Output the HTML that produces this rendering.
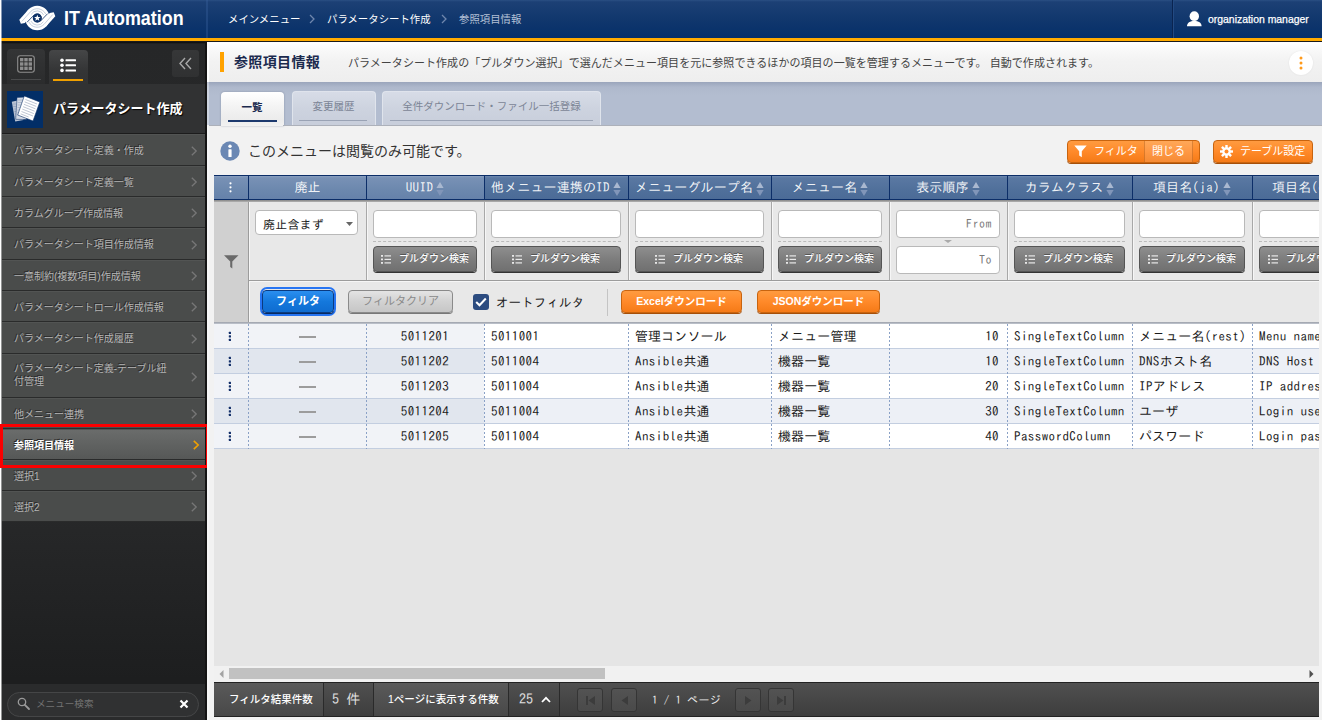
<!DOCTYPE html>
<html lang="ja">
<head>
<meta charset="utf-8">
<title>IT Automation</title>
<style>
*{box-sizing:border-box;margin:0;padding:0}
html,body{width:1322px;height:720px;overflow:hidden;background:#fff}
body{font-family:"Liberation Sans","Noto Sans CJK JP",sans-serif;font-size:12px;color:#333;position:relative}
div,span{position:absolute;white-space:nowrap}
svg{position:absolute;overflow:visible}
.g{font-family:"Liberation Mono","IPAGothic",monospace}
.ip{font-family:"IPAGothic","Liberation Mono",monospace;letter-spacing:.12px}
i{font-style:normal;letter-spacing:.42px}
#hd{left:2px;top:0;width:1320px;height:38px;background:linear-gradient(#2a4f83 0,#1c4075 5%,#11376d 50%,#052f69)}
#hdline{left:2px;top:38px;width:1320px;height:3px;background:#ffab00}
#hdline2{left:2px;top:41px;width:1320px;height:1px;background:#1a1a1a}
#logo-t{left:64px;top:6.500px;font-size:20.200px;font-weight:bold;color:#fff;transform:scaleX(.886);transform-origin:0 0}
.bc{top:11px;font-size:10.400px;color:#fff}
#user{left:1208px;top:12.500px;font-size:11px;color:#fff;transform:scaleX(.947);transform-origin:0 0;-webkit-text-stroke:.25px #fff}
#sb{left:2px;top:42px;width:203px;height:678px;background:linear-gradient(#262728,#2b2c2d 60%,#1d1e1f 94%,#1d1e1f)}
#sbr{left:205px;top:42px;width:2px;height:678px;background:#141414}
#grp{left:2px;top:84px;width:203px;height:50px;background:#313233}
#grpicon{left:7px;top:91px;width:36px;height:37px;background:#022e67;overflow:hidden}
#grpt{left:53px;top:98px;font-size:13px;font-weight:bold;color:#fff;text-shadow:1px 1px 1px #000}
.mi{left:2px;width:203px;background:#4a4c4b;border-top:1px solid #525453;border-bottom:1px solid #2a2b2b;color:#b4b4b4;font-size:10px;text-shadow:-1px -1px 0 #2a2a2a}
.mi span{left:12px}
#tb{left:207px;top:42px;width:1115px;height:40px;background:linear-gradient(#fff 0,#f8f8f8 22%,#f2f2f2 50%,#eee 100%)}
#tbbar{left:220px;top:52px;width:4px;height:20px;background:#ffa200}
#ttl{left:234px;top:51px;font-size:14px;font-weight:bold;color:#1b2a4e;letter-spacing:.35px}
#desc{left:348px;top:54px;font-size:11px;color:#444;letter-spacing:.05px}
#tabs{left:207px;top:82px;width:1115px;height:43px;background:linear-gradient(#9aa5bb,#aeb8cc 12%,#b3bdd0 30%,#b3bdd0)}
.tab{top:91px;height:34px;border-radius:4px 4px 0 0;font-size:10.500px;text-align:center;padding-top:7px}
#cont{left:207px;top:125px;width:1115px;height:595px;background:#f2f2f2}
.obtn{top:140px;height:23px;border:1px solid #c8640f;border-radius:4px;background:linear-gradient(#ff9b40,#ff8a2a 50%,#f57a17);box-shadow:0 1px 0 #a64f08;color:#fff;font-size:12px}
.th{top:175px;height:25px;border-top:1px solid #0c2e68;border-bottom:1px solid #0c2e68;color:#fff;font-size:13px;text-align:center;line-height:23px;color:rgba(255,255,255,.92)}
.thf{background:linear-gradient(#8ba1c1,#7891b5 8%,#6c88ae 60%,#6682aa)}
.thn{background:linear-gradient(#6f8ab0,#5a78a2 8%,#50709b 60%,#4b6b97)}
.fc{top:201px;height:79px;background:#e8e8e8;border-right:1px solid #c4c4c4}
.inp{top:210px;height:28px;background:#fff;border:1px solid #b9b9b9;border-radius:4px}
.dash{top:241px;height:0;border-top:1px dashed #bbb}
.pbtn{top:246px;height:26px;border:1px solid #555;border-radius:4px;background:linear-gradient(#8e8e8e,#7d7d7d 50%,#707070);box-shadow:0 1px 0 #333;color:#fff;font-size:10px;font-weight:bold;text-align:center;line-height:24px}
.td{height:25px;font-size:13px;line-height:24px;letter-spacing:.3px;color:#111;border-bottom:1px solid #c3cee0;overflow:hidden}
.bbtn{border:1px solid #0a3a80;border-radius:4px;background:linear-gradient(#2b8ff0,#1478dc 50%,#0f6cd0);box-shadow:0 1px 0 #062a60;color:#fff;font-size:11px;font-weight:bold;text-align:center;line-height:20px}
.cbtn{border:1px solid #8a8a8a;border-radius:4px;background:linear-gradient(#e4e4e4,#d2d2d2 50%,#c6c6c6);box-shadow:0 1px 0 #777;color:#8a8a8a;font-size:11px;text-align:center;line-height:20px}
.dbtn{border:1px solid #c8640f;border-radius:4px;background:linear-gradient(#ff9b40,#ff8a2a 50%,#f57a17);box-shadow:0 1px 0 #a64f08;color:#fff;font-size:10.500px;font-weight:bold;text-align:center;line-height:21px}
.ft{top:683px;height:33px;color:#fff;font-size:10.5px;line-height:33px}
.pb{top:688px;width:26px;height:24px;border:1px solid #353535;border-radius:3px;background:linear-gradient(#535353,#4a4a4a)}
</style>
</head>
<body>
<div id="hd"></div><div id="hdline"></div><div id="hdline2"></div>
<div style="left:206px;top:0;width:2px;height:38px;background:rgba(60,100,160,.35)"></div>
<svg style="left:0;top:0" width="70" height="38" viewBox="0 0 70 38">
<circle cx="37.3" cy="18" r="8.350" fill="none" stroke="#fff" stroke-width="7.700"/>
<path fill="#fff" d="M19.300 19.800L28.500 9.500 32 13.500 24.900 22.900 20.900 23.800z"/>
<path fill="#fff" d="M55.300 16.200L46.100 26.500 42.600 22.500 49.700 13.100 53.700 12.200z"/>
<g fill="none" stroke="#0f3369" stroke-width=".8">
<path d="M34.300 14.700L27 22.300"/><path d="M40.300 21.300L47.600 13.700"/>
</g>
<g fill="none" stroke="#0f3369" stroke-width=".55" opacity=".42">
<path d="M21.800 21.500L30.600 11.600A9.300 9.300 0 0 1 45.700 14"/>
<path d="M52.800 14.500L44 24.400A9.300 9.300 0 0 1 28.900 22"/>
<path d="M31.200 14.300A7.100 7.100 0 0 1 43.700 15"/>
<path d="M43.400 21.700A7.100 7.100 0 0 1 30.900 21"/>
</g>
<circle cx="37.3" cy="18" r="4.400" fill="#0e3166"/>
<path fill="#fff" transform="translate(37.3 18.100) scale(1.060)" d="M0-3.200l.8 2.100 2.250.1-1.750 1.400.6 2.170L0 1.330-1.900 2.570l.6-2.170-1.750-1.400 2.250-.1z"/>
</svg>
<div id="logo-t">IT Automation</div>
<div class="bc" style="left:228px">メインメニュー</div>
<div class="bc" style="left:327px">パラメータシート作成</div>
<div class="bc" style="left:459px;color:#b4c0d6">参照項目情報</div>
<svg style="left:309px;top:14px" width="6" height="10" viewBox="0 0 6 10"><path d="M1 1l4 4-4 4" fill="none" stroke="#6f86ad" stroke-width="1.3"/></svg>
<svg style="left:441px;top:14px" width="6" height="10" viewBox="0 0 6 10"><path d="M1 1l4 4-4 4" fill="none" stroke="#6f86ad" stroke-width="1.3"/></svg>
<div style="left:1172px;top:0;width:1px;height:38px;background:#0a2450"></div><div style="left:1173px;top:0;width:1px;height:38px;background:#234a82"></div>
<svg style="left:1186px;top:11px" width="16" height="16" viewBox="0 0 16 16"><ellipse cx="8.300" cy="5.200" rx="4.700" ry="4.900" fill="#fff"/><path d="M1 15.200c0-3.600 3-5.300 7.300-5.300s7.300 1.700 7.300 5.300z" fill="#fff"/></svg>
<div id="user">organization manager</div>
<div style="left:1px;top:0;width:1px;height:38px;background:rgba(12,50,105,.5)"></div><div style="left:1px;top:38px;width:1px;height:3px;background:rgba(255,171,0,.5)"></div><div style="left:1px;top:41px;width:1px;height:679px;background:rgba(38,39,40,.5)"></div>
<div id="sb"></div><div id="sbr"></div><div style="left:2px;top:42px;width:203px;height:2px;background:linear-gradient(#0a0a0a,rgba(10,10,10,0))"></div>
<div style="left:7px;top:49px;width:38px;height:35px;border-radius:4px 4px 0 0;background:linear-gradient(#343536,#2b2c2d)"></div>
<div style="left:11px;top:79px;width:30px;height:1px;background:#4a4b4c"></div>
<svg style="left:17px;top:55px" width="18" height="18" viewBox="0 0 18 18"><rect x=".7" y=".7" width="16.6" height="16.600" rx="2.500" fill="#2c2c2c" stroke="#8e8e8e" stroke-width="1.100"/>
<g fill="#8d8d8d"><rect x="3" y="3" width="3.4" height="3.400"/><rect x="7.3" y="3" width="3.4" height="3.400"/><rect x="11.6" y="3" width="3.4" height="3.400"/>
<rect x="3" y="7.3" width="3.4" height="3.400"/><rect x="7.3" y="7.3" width="3.4" height="3.400"/><rect x="11.6" y="7.3" width="3.4" height="3.400"/>
<rect x="3" y="11.6" width="3.4" height="3.400"/><rect x="7.3" y="11.6" width="3.4" height="3.400"/><rect x="11.6" y="11.6" width="3.4" height="3.400"/></g></svg>
<div style="left:49px;top:50px;width:39px;height:34px;border-radius:4px 4px 0 0;background:linear-gradient(#454647,#343536 60%,#313233)"></div>
<div style="left:53px;top:79px;width:30px;height:2px;background:#f0a000"></div>
<svg style="left:60px;top:57.600px" width="17" height="15" viewBox="0 0 17 15"><g fill="#fff"><circle cx="2" cy="2.2" r="1.800"/><circle cx="2" cy="7.3" r="1.800"/><circle cx="2" cy="12.4" r="1.800"/>
<rect x="5.5" y="1.2" width="10.5" height="2" rx=".5"/><rect x="5.5" y="6.3" width="10.5" height="2" rx=".5"/><rect x="5.5" y="11.4" width="10.5" height="2" rx=".5"/></g></svg>
<div style="left:172px;top:50px;width:27px;height:27px;border-radius:3px;background:linear-gradient(#363738,#303132)"></div>
<svg style="left:179px;top:57px" width="13" height="13" viewBox="0 0 13 13"><path d="M6 1L1 6.500l5 5.500M12 1L7 6.500l5 5.500" fill="none" stroke="#a8a8a8" stroke-width="1.400"/></svg>
<div id="grp"></div><div id="grpicon"></div>
<svg style="left:7px;top:92px" width="36" height="36" viewBox="0 0 36 36">
<path d="M4.800 9.800L11.500 8.300 16.500 28 8.200 29.600z" fill="#b9c3d4"/>
<path d="M5.800 12h5M6.300 14.500h5M6.800 17h5M7.300 19.500h5M7.800 22h5M8.300 24.500h5" stroke="#8d9ab2" stroke-width=".6"/>
<path d="M10 5.400L20 5 19.500 27.500 8.700 27.300z" fill="#d3d9e4" stroke="#0a2f66" stroke-width=".5"/>
<path d="M10.800 8h6M10.700 10.500h6M10.600 13h6M10.500 15.500h6M10.400 18h6M10.300 20.500h6M10.200 23h6" stroke="#9ca8bd" stroke-width=".6"/>
<path d="M17.300 3.900L32.800 10 26 29 10.700 23z" fill="#fff" stroke="#0a2f66" stroke-width=".6"/>
<g stroke="#a3adc0" stroke-width=".7"><path d="M18.500 7.500l11.500 4.500M17.700 9.900l11.500 4.500M16.900 12.300l11.500 4.500M16.100 14.700l11.500 4.500M15.300 17.100l11.500 4.500M14.500 19.500l11.500 4.500M13.700 21.900l8 3.100"/></g>
</svg>
<div id="grpt">パラメータシート作成</div>
<div style="left:2px;top:133px;width:203px;height:1px;background:#1c1c1c"></div>
<div class="mi" style="left:2px;top:134px;height:32px;"><span style="top:9px;line-height:13px">パラメータシート定義・作成</span></div>
<svg style="left:191px;top:146px" width="6" height="10" viewBox="0 0 6 10"><path d="M.8 .8l4.400 4.200-4.400 4.200" fill="none" stroke="#777" stroke-width="1.300"/></svg>
<div class="mi" style="left:2px;top:166px;height:31px;"><span style="top:9px;line-height:13px">パラメータシート定義一覧</span></div>
<svg style="left:191px;top:177px" width="6" height="10" viewBox="0 0 6 10"><path d="M.8 .8l4.400 4.200-4.400 4.200" fill="none" stroke="#777" stroke-width="1.300"/></svg>
<div class="mi" style="left:2px;top:197px;height:31px;"><span style="top:9px;line-height:13px">カラムグループ作成情報</span></div>
<svg style="left:191px;top:208px" width="6" height="10" viewBox="0 0 6 10"><path d="M.8 .8l4.400 4.200-4.400 4.200" fill="none" stroke="#777" stroke-width="1.300"/></svg>
<div class="mi" style="left:2px;top:228px;height:32px;"><span style="top:9px;line-height:13px">パラメータシート項目作成情報</span></div>
<svg style="left:191px;top:240px" width="6" height="10" viewBox="0 0 6 10"><path d="M.8 .8l4.400 4.200-4.400 4.200" fill="none" stroke="#777" stroke-width="1.300"/></svg>
<div class="mi" style="left:2px;top:260px;height:31px;"><span style="top:9px;line-height:13px">一意制約(複数項目)作成情報</span></div>
<svg style="left:191px;top:271px" width="6" height="10" viewBox="0 0 6 10"><path d="M.8 .8l4.400 4.200-4.400 4.200" fill="none" stroke="#777" stroke-width="1.300"/></svg>
<div class="mi" style="left:2px;top:291px;height:31px;"><span style="top:9px;line-height:13px">パラメータシートロール作成情報</span></div>
<svg style="left:191px;top:302px" width="6" height="10" viewBox="0 0 6 10"><path d="M.8 .8l4.400 4.200-4.400 4.200" fill="none" stroke="#777" stroke-width="1.300"/></svg>
<div class="mi" style="left:2px;top:322px;height:32px;"><span style="top:9px;line-height:13px">パラメータシート作成履歴</span></div>
<svg style="left:191px;top:334px" width="6" height="10" viewBox="0 0 6 10"><path d="M.8 .8l4.400 4.200-4.400 4.200" fill="none" stroke="#777" stroke-width="1.300"/></svg>
<div class="mi" style="left:2px;top:354px;height:44px;"><span style="top:7px;line-height:13px">パラメータシート定義-テーブル紐<br>付管理</span></div>
<svg style="left:191px;top:372px" width="6" height="10" viewBox="0 0 6 10"><path d="M.8 .8l4.400 4.200-4.400 4.200" fill="none" stroke="#777" stroke-width="1.300"/></svg>
<div class="mi" style="left:2px;top:398px;height:31px;"><span style="top:9px;line-height:13px">他メニュー連携</span></div>
<svg style="left:191px;top:409px" width="6" height="10" viewBox="0 0 6 10"><path d="M.8 .8l4.400 4.200-4.400 4.200" fill="none" stroke="#777" stroke-width="1.300"/></svg>
<div class="mi" style="left:2px;top:429px;height:31px;background:linear-gradient(#6a6c6b,#565857);color:#fff;font-weight:bold;"><span style="top:9px;line-height:13px">参照項目情報</span></div>
<svg style="left:193px;top:440px" width="6" height="10" viewBox="0 0 6 10"><path d="M.8 .8l4.400 4.200-4.400 4.200" fill="none" stroke="#f0a000" stroke-width="1.600"/></svg>
<div class="mi" style="left:2px;top:460px;height:31px;"><span style="top:9px;line-height:13px">選択1</span></div>
<svg style="left:191px;top:471px" width="6" height="10" viewBox="0 0 6 10"><path d="M.8 .8l4.400 4.200-4.400 4.200" fill="none" stroke="#777" stroke-width="1.300"/></svg>
<div class="mi" style="left:2px;top:491px;height:31px;"><span style="top:9px;line-height:13px">選択2</span></div>
<svg style="left:191px;top:502px" width="6" height="10" viewBox="0 0 6 10"><path d="M.8 .8l4.400 4.200-4.400 4.200" fill="none" stroke="#777" stroke-width="1.300"/></svg>
<div style="left:0;top:424px;width:209px;height:44px;border:3px solid #fb0000"></div>
<div style="left:2px;top:684px;width:203px;height:36px;background:#2a2b2c"></div>
<div style="left:7px;top:692px;width:192px;height:25px;border-radius:13px;background:#303132;border:1px solid #454647"></div>
<svg style="left:17px;top:697px" width="14" height="14" viewBox="0 0 14 14"><circle cx="5" cy="5" r="3.700" fill="none" stroke="#9a9a9a" stroke-width="1.300"/><path d="M7.800 7.800l4.200 4.200" stroke="#9a9a9a" stroke-width="1.800" stroke-linecap="round"/></svg>
<div style="left:36px;top:697px;font-size:9.600px;color:#737373;line-height:14px">メニュー検索</div>
<svg style="left:179px;top:699px" width="10" height="10" viewBox="0 0 10 10"><path d="M1.500 1.500l7 7M8.500 1.500l-7 7" stroke="#fff" stroke-width="2.200"/></svg>
<div id="tb"></div><div style="left:207px;top:42px;width:2px;height:40px;background:#fff"></div><div id="tbbar"></div>
<div id="ttl">参照項目情報</div>
<div id="desc">パラメータシート作成の「プルダウン選択」で選んだメニュー項目を元に参照できるほかの項目の一覧を管理するメニューです。 自動で作成されます。</div>
<div style="left:1289px;top:51px;width:24px;height:24px;border-radius:12px;background:#fff;box-shadow:0 0 2px rgba(0,0,0,.08)"></div>
<svg style="left:1299px;top:56px" width="4" height="14" viewBox="0 0 4 14"><g fill="#ff9a1a"><circle cx="2" cy="2" r="1.500"/><circle cx="2" cy="7" r="1.500"/><circle cx="2" cy="12" r="1.500"/></g></svg>
<div id="tabs"></div>
<div id="cont"></div>
<div style="left:207px;top:82px;width:2px;height:638px;background:rgba(255,255,255,.35)"></div>
<div class="tab" style="left:220.500px;width:63px;background:linear-gradient(#fff,#f3f3f3 45%,#ececec 80%,#f2f2f2);color:#1b2a4e;font-weight:bold;top:92px;box-shadow:0 0 2px rgba(40,50,80,.35)">一覧</div>
<div style="left:228px;top:120px;width:49px;height:2px;background:#1d3a6e"></div>
<div class="tab" style="left:291.500px;width:84px;background:linear-gradient(#d7dce7,#cdd3df 50%,#c8cedb);color:#7c8596;border:1px solid rgba(226,230,238,.9);border-bottom:0;padding-top:6px">変更履歴</div>
<div style="left:299px;top:120px;width:68px;height:1px;background:#9aa3b5"></div>
<div class="tab" style="left:382px;width:219px;background:linear-gradient(#d7dce7,#cdd3df 50%,#c8cedb);color:#7c8596;border:1px solid rgba(226,230,238,.9);border-bottom:0;padding-top:6px">全件ダウンロード・ファイル一括登録</div>
<div style="left:390px;top:120px;width:203px;height:1px;background:#9aa3b5"></div>
<div style="left:209px;top:125px;width:1113px;height:1px;background:#adb1ba"></div>
<div style="left:221px;top:125px;width:62px;height:1px;background:#f2f2f2"></div>
<svg style="left:220px;top:141px" width="20" height="20" viewBox="0 0 20 20"><circle cx="10" cy="10" r="9.700" fill="#6b88b4"/><circle cx="10" cy="5.300" r="1.700" fill="#fff"/><rect x="8.400" y="8.200" width="3.200" height="7.800" rx=".6" fill="#fff"/></svg>
<div style="left:248px;top:141px;font-size:14px;color:#333;line-height:20px">このメニューは閲覧のみ可能です。</div>
<div class="obtn" style="left:1067px;width:133px"></div>
<div style="left:1144px;top:141px;width:49px;height:21px;background:rgba(255,255,255,.13);border-left:1px solid rgba(150,70,0,.35);border-right:1px solid rgba(150,70,0,.35)"></div>
<svg style="left:1074px;top:145px" width="13" height="13" viewBox="0 0 13 13"><path d="M.3 .5h12.400L7.800 6.300v5.900L5.200 10.500V6.300z" fill="#fff"/></svg>
<div style="left:1094px;top:143px;font-size:11px;color:#fff;line-height:16px">フィルタ</div>
<div style="left:1152px;top:143px;font-size:11px;color:#fff;line-height:16px">閉じる</div>
<div class="obtn" style="left:1213px;width:100px"></div>
<svg style="left:1220px;top:145px" width="13" height="13" viewBox="0 0 13 13"><g fill="#fff"><circle cx="6.500" cy="6.500" r="4.300"/><g id="t"><rect x="5.300" y="0" width="2.400" height="13"/><rect x="0" y="5.300" width="13" height="2.400"/></g><g transform="rotate(45 6.500 6.500)"><rect x="5.300" y="0" width="2.400" height="13"/><rect x="0" y="5.300" width="13" height="2.400"/></g></g><circle cx="6.500" cy="6.500" r="2" fill="#ff8a2a"/></svg>
<div style="left:1240px;top:143px;font-size:11px;color:#fff;line-height:16px">テーブル設定</div>
<div style="left:214px;top:175px;width:1105px;height:491px;background:#e5e5e5;overflow:hidden" id="tw">
<div class="th thf ip" style="left:0px;top:0;width:35px;border-right:1px solid #0c2e68;"></div>
<div class="th thf ip" style="left:35px;top:0;width:118px;border-right:1px solid #0c2e68;">廃止</div>
<div class="th thf ip" style="left:153px;top:0;width:118px;border-right:1px solid #0c2e68;padding-right:12px"><span style="position:relative"><i>UUID</i><svg style="right:-11px;top:1px" width="8" height="14" viewBox="0 0 8 14"><path d="M4 0L7.600 6H.4z" fill="#a9b8d0"/><path d="M4 14L7.600 8H.4z" fill="#8196b9"/></svg></span></div>
<div class="th thn ip" style="left:271px;top:0;width:144px;border-right:1px solid #0c2e68;padding-right:12px"><span style="position:relative">他メニュー連携の<i>ID</i><svg style="right:-11px;top:1px" width="8" height="14" viewBox="0 0 8 14"><path d="M4 0L7.600 6H.4z" fill="#a9b8d0"/><path d="M4 14L7.600 8H.4z" fill="#8196b9"/></svg></span></div>
<div class="th thn ip" style="left:415px;top:0;width:143px;border-right:1px solid #0c2e68;padding-right:12px"><span style="position:relative">メニューグループ名<svg style="right:-11px;top:1px" width="8" height="14" viewBox="0 0 8 14"><path d="M4 0L7.600 6H.4z" fill="#a9b8d0"/><path d="M4 14L7.600 8H.4z" fill="#8196b9"/></svg></span></div>
<div class="th thn ip" style="left:558px;top:0;width:118px;border-right:1px solid #0c2e68;padding-right:12px"><span style="position:relative">メニュー名<svg style="right:-11px;top:1px" width="8" height="14" viewBox="0 0 8 14"><path d="M4 0L7.600 6H.4z" fill="#a9b8d0"/><path d="M4 14L7.600 8H.4z" fill="#8196b9"/></svg></span></div>
<div class="th thn ip" style="left:676px;top:0;width:118px;border-right:1px solid #0c2e68;padding-right:12px"><span style="position:relative">表示順序<svg style="right:-11px;top:1px" width="8" height="14" viewBox="0 0 8 14"><path d="M4 0L7.600 6H.4z" fill="#a9b8d0"/><path d="M4 14L7.600 8H.4z" fill="#8196b9"/></svg></span></div>
<div class="th thn ip" style="left:794px;top:0;width:125px;border-right:1px solid #0c2e68;padding-right:12px"><span style="position:relative">カラムクラス<svg style="right:-11px;top:1px" width="8" height="14" viewBox="0 0 8 14"><path d="M4 0L7.600 6H.4z" fill="#a9b8d0"/><path d="M4 14L7.600 8H.4z" fill="#8196b9"/></svg></span></div>
<div class="th thn ip" style="left:919px;top:0;width:120px;border-right:1px solid #0c2e68;padding-right:12px"><span style="position:relative">項目名<i>(ja)</i><svg style="right:-11px;top:1px" width="8" height="14" viewBox="0 0 8 14"><path d="M4 0L7.600 6H.4z" fill="#a9b8d0"/><path d="M4 14L7.600 8H.4z" fill="#8196b9"/></svg></span></div>
<div class="th thn ip" style="left:1039px;top:0;width:118px;border-right:1px solid #0c2e68;padding-right:12px"><span style="position:relative">項目名<i>(en)</i><svg style="right:-11px;top:1px" width="8" height="14" viewBox="0 0 8 14"><path d="M4 0L7.600 6H.4z" fill="#a9b8d0"/><path d="M4 14L7.600 8H.4z" fill="#8196b9"/></svg></span></div>
<svg style="left:15px;top:7px" width="3" height="11" viewBox="0 0 3 11"><g fill="#fff"><circle cx="1.500" cy="1.300" r="1.100"/><circle cx="1.500" cy="5.300" r="1.100"/><circle cx="1.500" cy="9.300" r="1.100"/></g></svg>
<div style="left:0;top:25px;width:1105px;height:3px;background:linear-gradient(#858585,#a8a8a8 50%,#d0d0d0)"></div>
<div style="left:0;top:27px;width:35px;height:121px;background:#d0d0d0;border-right:1px solid #9c9c9c"></div>
<svg style="left:10px;top:80px" width="14" height="14" viewBox="0 0 14 14"><path d="M0 .3h14.500L8.300 6.600v7L6.200 12V6.600z" fill="#6a6a6a"/></svg>
<div style="left:35px;top:27px;width:118px;height:78px;background:#e8e8e8;border-right:1px solid #a8a8a8;box-shadow:inset 1px 0 0 #f6f6f6"></div>
<div class="inp" style="left:41px;top:35px;width:103px;height:25px"></div>
<div class="ip" style="left:49px;top:42px;font-size:12px;color:#222;line-height:15px;letter-spacing:.2px">廃止含まず</div>
<svg style="left:132px;top:47px" width="7" height="4" viewBox="0 0 7 4"><path d="M0 0h7L3.500 4z" fill="#666"/></svg>
<div style="left:153px;top:27px;width:118px;height:78px;background:#e8e8e8;border-right:1px solid #a8a8a8;box-shadow:inset 1px 0 0 #f6f6f6"></div>
<div class="inp" style="left:159px;top:35px;width:104px"></div>
<div class="dash" style="left:159px;top:66px;width:104px"></div>
<div class="pbtn" style="left:159px;top:71px;width:104px"></div>
<svg style="left:167px;top:80px" width="10" height="9" viewBox="0 0 10 9"><g fill="#e8e8e8"><rect x="0" y="0" width="2" height="1.800"/><rect x="0" y="3.500" width="2" height="1.800"/><rect x="0" y="7" width="2" height="1.800"/><rect x="3.500" y=".3" width="6.500" height="1.200"/><rect x="3.500" y="3.800" width="6.500" height="1.200"/><rect x="3.500" y="7.300" width="6.500" height="1.200"/></g></svg>
<div style="left:185px;top:77px;font-size:10px;font-weight:500;color:#fff;line-height:14px;text-shadow:0 -1px 0 #555">プルダウン検索</div>
<div style="left:271px;top:27px;width:144px;height:78px;background:#e8e8e8;border-right:1px solid #a8a8a8;box-shadow:inset 1px 0 0 #f6f6f6"></div>
<div class="inp" style="left:277px;top:35px;width:130px"></div>
<div class="dash" style="left:277px;top:66px;width:130px"></div>
<div class="pbtn" style="left:277px;top:71px;width:130px"></div>
<svg style="left:298px;top:80px" width="10" height="9" viewBox="0 0 10 9"><g fill="#e8e8e8"><rect x="0" y="0" width="2" height="1.800"/><rect x="0" y="3.500" width="2" height="1.800"/><rect x="0" y="7" width="2" height="1.800"/><rect x="3.500" y=".3" width="6.500" height="1.200"/><rect x="3.500" y="3.800" width="6.500" height="1.200"/><rect x="3.500" y="7.300" width="6.500" height="1.200"/></g></svg>
<div style="left:316px;top:77px;font-size:10px;font-weight:500;color:#fff;line-height:14px;text-shadow:0 -1px 0 #555">プルダウン検索</div>
<div style="left:415px;top:27px;width:143px;height:78px;background:#e8e8e8;border-right:1px solid #a8a8a8;box-shadow:inset 1px 0 0 #f6f6f6"></div>
<div class="inp" style="left:421px;top:35px;width:129px"></div>
<div class="dash" style="left:421px;top:66px;width:129px"></div>
<div class="pbtn" style="left:421px;top:71px;width:129px"></div>
<svg style="left:441px;top:80px" width="10" height="9" viewBox="0 0 10 9"><g fill="#e8e8e8"><rect x="0" y="0" width="2" height="1.800"/><rect x="0" y="3.500" width="2" height="1.800"/><rect x="0" y="7" width="2" height="1.800"/><rect x="3.500" y=".3" width="6.500" height="1.200"/><rect x="3.500" y="3.800" width="6.500" height="1.200"/><rect x="3.500" y="7.300" width="6.500" height="1.200"/></g></svg>
<div style="left:459px;top:77px;font-size:10px;font-weight:500;color:#fff;line-height:14px;text-shadow:0 -1px 0 #555">プルダウン検索</div>
<div style="left:558px;top:27px;width:118px;height:78px;background:#e8e8e8;border-right:1px solid #a8a8a8;box-shadow:inset 1px 0 0 #f6f6f6"></div>
<div class="inp" style="left:564px;top:35px;width:104px"></div>
<div class="dash" style="left:564px;top:66px;width:104px"></div>
<div class="pbtn" style="left:564px;top:71px;width:104px"></div>
<svg style="left:572px;top:80px" width="10" height="9" viewBox="0 0 10 9"><g fill="#e8e8e8"><rect x="0" y="0" width="2" height="1.800"/><rect x="0" y="3.500" width="2" height="1.800"/><rect x="0" y="7" width="2" height="1.800"/><rect x="3.500" y=".3" width="6.500" height="1.200"/><rect x="3.500" y="3.800" width="6.500" height="1.200"/><rect x="3.500" y="7.300" width="6.500" height="1.200"/></g></svg>
<div style="left:590px;top:77px;font-size:10px;font-weight:500;color:#fff;line-height:14px;text-shadow:0 -1px 0 #555">プルダウン検索</div>
<div style="left:676px;top:27px;width:118px;height:78px;background:#e8e8e8;border-right:1px solid #a8a8a8;box-shadow:inset 1px 0 0 #f6f6f6"></div>
<div class="inp" style="left:682px;top:35px;width:104px"></div>
<div class="ip" style="left:683px;top:42px;width:95px;text-align:right;font-size:12px;color:#7a7a7a;letter-spacing:.5px">From</div>
<svg style="left:730px;top:65px" width="8" height="3" viewBox="0 0 8 3"><path d="M0 0h8L4 3z" fill="#aaa"/></svg>
<div class="inp" style="left:682px;top:71px;width:104px"></div>
<div class="ip" style="left:683px;top:78px;width:95px;text-align:right;font-size:12px;color:#7a7a7a;letter-spacing:.5px">To</div>
<div style="left:794px;top:27px;width:125px;height:78px;background:#e8e8e8;border-right:1px solid #a8a8a8;box-shadow:inset 1px 0 0 #f6f6f6"></div>
<div class="inp" style="left:800px;top:35px;width:111px"></div>
<div class="dash" style="left:800px;top:66px;width:111px"></div>
<div class="pbtn" style="left:800px;top:71px;width:111px"></div>
<svg style="left:811px;top:80px" width="10" height="9" viewBox="0 0 10 9"><g fill="#e8e8e8"><rect x="0" y="0" width="2" height="1.800"/><rect x="0" y="3.500" width="2" height="1.800"/><rect x="0" y="7" width="2" height="1.800"/><rect x="3.500" y=".3" width="6.500" height="1.200"/><rect x="3.500" y="3.800" width="6.500" height="1.200"/><rect x="3.500" y="7.300" width="6.500" height="1.200"/></g></svg>
<div style="left:829px;top:77px;font-size:10px;font-weight:500;color:#fff;line-height:14px;text-shadow:0 -1px 0 #555">プルダウン検索</div>
<div style="left:919px;top:27px;width:120px;height:78px;background:#e8e8e8;border-right:1px solid #a8a8a8;box-shadow:inset 1px 0 0 #f6f6f6"></div>
<div class="inp" style="left:925px;top:35px;width:106px"></div>
<div class="dash" style="left:925px;top:66px;width:106px"></div>
<div class="pbtn" style="left:925px;top:71px;width:106px"></div>
<svg style="left:934px;top:80px" width="10" height="9" viewBox="0 0 10 9"><g fill="#e8e8e8"><rect x="0" y="0" width="2" height="1.800"/><rect x="0" y="3.500" width="2" height="1.800"/><rect x="0" y="7" width="2" height="1.800"/><rect x="3.500" y=".3" width="6.500" height="1.200"/><rect x="3.500" y="3.800" width="6.500" height="1.200"/><rect x="3.500" y="7.300" width="6.500" height="1.200"/></g></svg>
<div style="left:952px;top:77px;font-size:10px;font-weight:500;color:#fff;line-height:14px;text-shadow:0 -1px 0 #555">プルダウン検索</div>
<div style="left:1039px;top:27px;width:148px;height:78px;background:#e8e8e8;border-right:1px solid #a8a8a8;box-shadow:inset 1px 0 0 #f6f6f6"></div>
<div class="inp" style="left:1045px;top:35px;width:134px"></div>
<div class="dash" style="left:1045px;top:66px;width:134px"></div>
<div class="pbtn" style="left:1045px;top:71px;width:134px"></div>
<svg style="left:1054px;top:80px" width="10" height="9" viewBox="0 0 10 9"><g fill="#e8e8e8"><rect x="0" y="0" width="2" height="1.800"/><rect x="0" y="3.500" width="2" height="1.800"/><rect x="0" y="7" width="2" height="1.800"/><rect x="3.500" y=".3" width="6.500" height="1.200"/><rect x="3.500" y="3.800" width="6.500" height="1.200"/><rect x="3.500" y="7.300" width="6.500" height="1.200"/></g></svg>
<div style="left:1072px;top:77px;font-size:10px;font-weight:500;color:#fff;line-height:14px;text-shadow:0 -1px 0 #555">プルダウン検索</div>
<div style="left:35px;top:105px;width:1070px;height:43px;background:#e8e8e8;border-top:1px solid #9c9c9c;box-shadow:inset 1px 1px 0 #f6f6f6"></div>
<div style="left:46px;top:112px;width:76px;height:29px;border:2px solid #2674f2;border-radius:7px"></div>
<div class="bbtn" style="left:48px;top:115px;width:72px;height:23px">フィルタ</div>
<div class="cbtn" style="left:134px;top:115px;width:105px;height:23px">フィルタクリア</div>
<div style="left:259px;top:119px;width:16px;height:16px;border-radius:3px;background:#2c4c80"></div>
<svg style="left:261px;top:122px" width="12" height="10" viewBox="0 0 12 10"><path d="M1.200 5l3.300 3.300L10.800 1.500" fill="none" stroke="#fff" stroke-width="2"/></svg>
<div class="ip" style="left:282px;top:120px;font-size:12.500px;color:#222;line-height:16px">オートフィルタ</div>
<div style="left:393px;top:114px;width:1px;height:27px;background:#c4c4c4"></div>
<div class="dbtn" style="left:407px;top:115px;width:121px;height:23px">Excelダウンロード</div>
<div class="dbtn" style="left:543px;top:115px;width:123px;height:23px">JSONダウンロード</div>
<div style="left:0;top:147px;width:1105px;height:2px;background:linear-gradient(#9b9fa8,#c3c8d2)"></div>
<div class="td" style="left:0;top:149px;width:270px;background:#f1f3f7"></div>
<div class="td" style="left:270px;top:149px;width:900px;background:#ffffff"></div>
<svg style="left:14.300px;top:156px" width="4" height="11" viewBox="0 0 4 11"><g fill="#14306a"><rect x=".8" y=".7" width="2.200" height="2.200" rx=".5"/><rect x=".8" y="4.200" width="2.200" height="2.200" rx=".5"/><rect x=".8" y="7.700" width="2.200" height="2.200" rx=".5"/></g></svg>
<div style="left:85px;top:161px;width:17px;height:2px;background:#9c9c9c"></div>
<div class="ip" style="left:152px;width:118px;text-align:center;top:150px;font-size:13px;line-height:24px;color:#1a1a1a"><i>5011201</i></div>
<div class="ip" style="left:277px;top:150px;font-size:13px;line-height:24px;color:#1a1a1a"><i>5011001</i></div>
<div class="ip" style="left:421px;top:150px;font-size:13px;line-height:24px;color:#1a1a1a">管理コンソール</div>
<div class="ip" style="left:564px;top:150px;font-size:13px;line-height:24px;color:#1a1a1a">メニュー管理</div>
<div class="ip" style="left:675px;width:110px;text-align:right;top:150px;font-size:13px;line-height:24px;color:#1a1a1a"><i>10</i></div>
<div class="ip" style="left:800px;top:150px;font-size:13px;line-height:24px;color:#1a1a1a"><i>SingleTextColumn</i></div>
<div class="ip" style="left:925px;top:150px;font-size:13px;line-height:24px;color:#1a1a1a">メニュー名<i>(rest)</i></div>
<div class="ip" style="left:1045px;top:150px;font-size:13px;line-height:24px;color:#1a1a1a"><i>Menu name(rest)</i></div>
<div class="td" style="left:0;top:174px;width:270px;background:#e1e6ee"></div>
<div class="td" style="left:270px;top:174px;width:900px;background:#edf0f6"></div>
<svg style="left:14.300px;top:181px" width="4" height="11" viewBox="0 0 4 11"><g fill="#14306a"><rect x=".8" y=".7" width="2.200" height="2.200" rx=".5"/><rect x=".8" y="4.200" width="2.200" height="2.200" rx=".5"/><rect x=".8" y="7.700" width="2.200" height="2.200" rx=".5"/></g></svg>
<div style="left:85px;top:186px;width:17px;height:2px;background:#9c9c9c"></div>
<div class="ip" style="left:152px;width:118px;text-align:center;top:175px;font-size:13px;line-height:24px;color:#1a1a1a"><i>5011202</i></div>
<div class="ip" style="left:277px;top:175px;font-size:13px;line-height:24px;color:#1a1a1a"><i>5011004</i></div>
<div class="ip" style="left:421px;top:175px;font-size:13px;line-height:24px;color:#1a1a1a"><i>Ansible</i>共通</div>
<div class="ip" style="left:564px;top:175px;font-size:13px;line-height:24px;color:#1a1a1a">機器一覧</div>
<div class="ip" style="left:675px;width:110px;text-align:right;top:175px;font-size:13px;line-height:24px;color:#1a1a1a"><i>10</i></div>
<div class="ip" style="left:800px;top:175px;font-size:13px;line-height:24px;color:#1a1a1a"><i>SingleTextColumn</i></div>
<div class="ip" style="left:925px;top:175px;font-size:13px;line-height:24px;color:#1a1a1a"><i>DNS</i>ホスト名</div>
<div class="ip" style="left:1045px;top:175px;font-size:13px;line-height:24px;color:#1a1a1a"><i>DNS Host name</i></div>
<div class="td" style="left:0;top:199px;width:270px;background:#f1f3f7"></div>
<div class="td" style="left:270px;top:199px;width:900px;background:#ffffff"></div>
<svg style="left:14.300px;top:206px" width="4" height="11" viewBox="0 0 4 11"><g fill="#14306a"><rect x=".8" y=".7" width="2.200" height="2.200" rx=".5"/><rect x=".8" y="4.200" width="2.200" height="2.200" rx=".5"/><rect x=".8" y="7.700" width="2.200" height="2.200" rx=".5"/></g></svg>
<div style="left:85px;top:211px;width:17px;height:2px;background:#9c9c9c"></div>
<div class="ip" style="left:152px;width:118px;text-align:center;top:200px;font-size:13px;line-height:24px;color:#1a1a1a"><i>5011203</i></div>
<div class="ip" style="left:277px;top:200px;font-size:13px;line-height:24px;color:#1a1a1a"><i>5011004</i></div>
<div class="ip" style="left:421px;top:200px;font-size:13px;line-height:24px;color:#1a1a1a"><i>Ansible</i>共通</div>
<div class="ip" style="left:564px;top:200px;font-size:13px;line-height:24px;color:#1a1a1a">機器一覧</div>
<div class="ip" style="left:675px;width:110px;text-align:right;top:200px;font-size:13px;line-height:24px;color:#1a1a1a"><i>20</i></div>
<div class="ip" style="left:800px;top:200px;font-size:13px;line-height:24px;color:#1a1a1a"><i>SingleTextColumn</i></div>
<div class="ip" style="left:925px;top:200px;font-size:13px;line-height:24px;color:#1a1a1a"><i>IP</i>アドレス</div>
<div class="ip" style="left:1045px;top:200px;font-size:13px;line-height:24px;color:#1a1a1a"><i>IP address</i></div>
<div class="td" style="left:0;top:224px;width:270px;background:#e1e6ee"></div>
<div class="td" style="left:270px;top:224px;width:900px;background:#edf0f6"></div>
<svg style="left:14.300px;top:231px" width="4" height="11" viewBox="0 0 4 11"><g fill="#14306a"><rect x=".8" y=".7" width="2.200" height="2.200" rx=".5"/><rect x=".8" y="4.200" width="2.200" height="2.200" rx=".5"/><rect x=".8" y="7.700" width="2.200" height="2.200" rx=".5"/></g></svg>
<div style="left:85px;top:236px;width:17px;height:2px;background:#9c9c9c"></div>
<div class="ip" style="left:152px;width:118px;text-align:center;top:225px;font-size:13px;line-height:24px;color:#1a1a1a"><i>5011204</i></div>
<div class="ip" style="left:277px;top:225px;font-size:13px;line-height:24px;color:#1a1a1a"><i>5011004</i></div>
<div class="ip" style="left:421px;top:225px;font-size:13px;line-height:24px;color:#1a1a1a"><i>Ansible</i>共通</div>
<div class="ip" style="left:564px;top:225px;font-size:13px;line-height:24px;color:#1a1a1a">機器一覧</div>
<div class="ip" style="left:675px;width:110px;text-align:right;top:225px;font-size:13px;line-height:24px;color:#1a1a1a"><i>30</i></div>
<div class="ip" style="left:800px;top:225px;font-size:13px;line-height:24px;color:#1a1a1a"><i>SingleTextColumn</i></div>
<div class="ip" style="left:925px;top:225px;font-size:13px;line-height:24px;color:#1a1a1a">ユーザ</div>
<div class="ip" style="left:1045px;top:225px;font-size:13px;line-height:24px;color:#1a1a1a"><i>Login user</i></div>
<div class="td" style="left:0;top:249px;width:270px;background:#f1f3f7"></div>
<div class="td" style="left:270px;top:249px;width:900px;background:#ffffff"></div>
<svg style="left:14.300px;top:256px" width="4" height="11" viewBox="0 0 4 11"><g fill="#14306a"><rect x=".8" y=".7" width="2.200" height="2.200" rx=".5"/><rect x=".8" y="4.200" width="2.200" height="2.200" rx=".5"/><rect x=".8" y="7.700" width="2.200" height="2.200" rx=".5"/></g></svg>
<div style="left:85px;top:261px;width:17px;height:2px;background:#9c9c9c"></div>
<div class="ip" style="left:152px;width:118px;text-align:center;top:250px;font-size:13px;line-height:24px;color:#1a1a1a"><i>5011205</i></div>
<div class="ip" style="left:277px;top:250px;font-size:13px;line-height:24px;color:#1a1a1a"><i>5011004</i></div>
<div class="ip" style="left:421px;top:250px;font-size:13px;line-height:24px;color:#1a1a1a"><i>Ansible</i>共通</div>
<div class="ip" style="left:564px;top:250px;font-size:13px;line-height:24px;color:#1a1a1a">機器一覧</div>
<div class="ip" style="left:675px;width:110px;text-align:right;top:250px;font-size:13px;line-height:24px;color:#1a1a1a"><i>40</i></div>
<div class="ip" style="left:800px;top:250px;font-size:13px;line-height:24px;color:#1a1a1a"><i>PasswordColumn</i></div>
<div class="ip" style="left:925px;top:250px;font-size:13px;line-height:24px;color:#1a1a1a">パスワード</div>
<div class="ip" style="left:1045px;top:250px;font-size:13px;line-height:24px;color:#1a1a1a"><i>Login password</i></div>
<div style="left:34px;top:149px;width:1px;height:125px;background:repeating-linear-gradient(#8aa1c6 0 2px,transparent 2px 4px)"></div>
<div style="left:152px;top:149px;width:1px;height:125px;background:repeating-linear-gradient(#8aa1c6 0 2px,transparent 2px 4px)"></div>
<div style="left:270px;top:149px;width:1px;height:125px;background:repeating-linear-gradient(#8aa1c6 0 2px,transparent 2px 4px)"></div>
<div style="left:414px;top:149px;width:1px;height:125px;background:repeating-linear-gradient(#8aa1c6 0 2px,transparent 2px 4px)"></div>
<div style="left:557px;top:149px;width:1px;height:125px;background:repeating-linear-gradient(#8aa1c6 0 2px,transparent 2px 4px)"></div>
<div style="left:675px;top:149px;width:1px;height:125px;background:repeating-linear-gradient(#8aa1c6 0 2px,transparent 2px 4px)"></div>
<div style="left:793px;top:149px;width:1px;height:125px;background:repeating-linear-gradient(#8aa1c6 0 2px,transparent 2px 4px)"></div>
<div style="left:918px;top:149px;width:1px;height:125px;background:repeating-linear-gradient(#8aa1c6 0 2px,transparent 2px 4px)"></div>
<div style="left:1038px;top:149px;width:1px;height:125px;background:repeating-linear-gradient(#8aa1c6 0 2px,transparent 2px 4px)"></div>
</div>
<div style="left:1319px;top:175px;width:3px;height:545px;background:#f2f2f2"></div>
<div style="left:214px;top:666px;width:1105px;height:16px;background:#f1f1f1"></div>
<div style="left:229px;top:668px;width:376px;height:11px;background:#c1c1c1"></div>
<svg style="left:219px;top:670px" width="5" height="8" viewBox="0 0 5 8"><path d="M4.500 0v8L.5 4z" fill="#a3a3a3"/></svg>
<svg style="left:1309px;top:670px" width="5" height="8" viewBox="0 0 5 8"><path d="M.5 0v8l4-4z" fill="#505050"/></svg>
<div style="left:214px;top:682px;width:1105px;height:35px;background:linear-gradient(#505050,#3d3d3d);border-top:1px solid #222;border-bottom:1px solid #222"></div>
<div style="left:214px;top:683px;width:110px;height:33px;background:linear-gradient(#5a5a5a,#484848)"></div>
<div style="left:373px;top:683px;width:136px;height:33px;background:linear-gradient(#5a5a5a,#484848)"></div>
<div style="left:323px;top:683px;width:1px;height:33px;background:#2a2a2a"></div>
<div style="left:373px;top:683px;width:1px;height:33px;background:#2a2a2a"></div>
<div style="left:508px;top:683px;width:1px;height:33px;background:#2a2a2a"></div>
<div style="left:559px;top:683px;width:1px;height:33px;background:#2a2a2a"></div>
<div class="ft" style="left:229px;font-weight:500">フィルタ結果件数</div>
<div class="ft ip" style="left:332px;font-size:14px;color:#e0e0e0">5 件</div>
<div class="ft" style="left:388px;font-weight:500">1ページに表示する件数</div>
<div class="ft ip" style="left:519px;font-size:14px;color:#e0e0e0">25</div>
<svg style="left:541px;top:696px" width="10" height="7" viewBox="0 0 10 7"><path d="M1 6l4-4.200L9 6" fill="none" stroke="#fff" stroke-width="1.800"/></svg>
<div class="pb" style="left:577px"></div>
<svg style="left:586px;top:696px" width="9" height="9" viewBox="0 0 9 9"><g fill="#3c3c3c"><rect x="0" y="0" width="2" height="9"/><path d="M9 0v9L2.500 4.500z"/></g></svg>
<div class="pb" style="left:611px"></div>
<svg style="left:620px;top:696px" width="9" height="9" viewBox="0 0 9 9"><g fill="#3c3c3c"><path d="M8 0v9L1.500 4.500z"/></g></svg>
<div class="pb" style="left:735px"></div>
<svg style="left:744px;top:696px" width="9" height="9" viewBox="0 0 9 9"><g fill="#3c3c3c"><path d="M1 0v9l6.500-4.500z"/></g></svg>
<div class="pb" style="left:768px"></div>
<svg style="left:777px;top:696px" width="9" height="9" viewBox="0 0 9 9"><g fill="#3c3c3c"><rect x="7" y="0" width="2" height="9"/><path d="M0 0v9l6.500-4.500z"/></g></svg>
<div class="ft ip" style="left:652px;font-size:11px;letter-spacing:.35px;color:#eee">1 / 1 ページ</div>
</body>
</html>
